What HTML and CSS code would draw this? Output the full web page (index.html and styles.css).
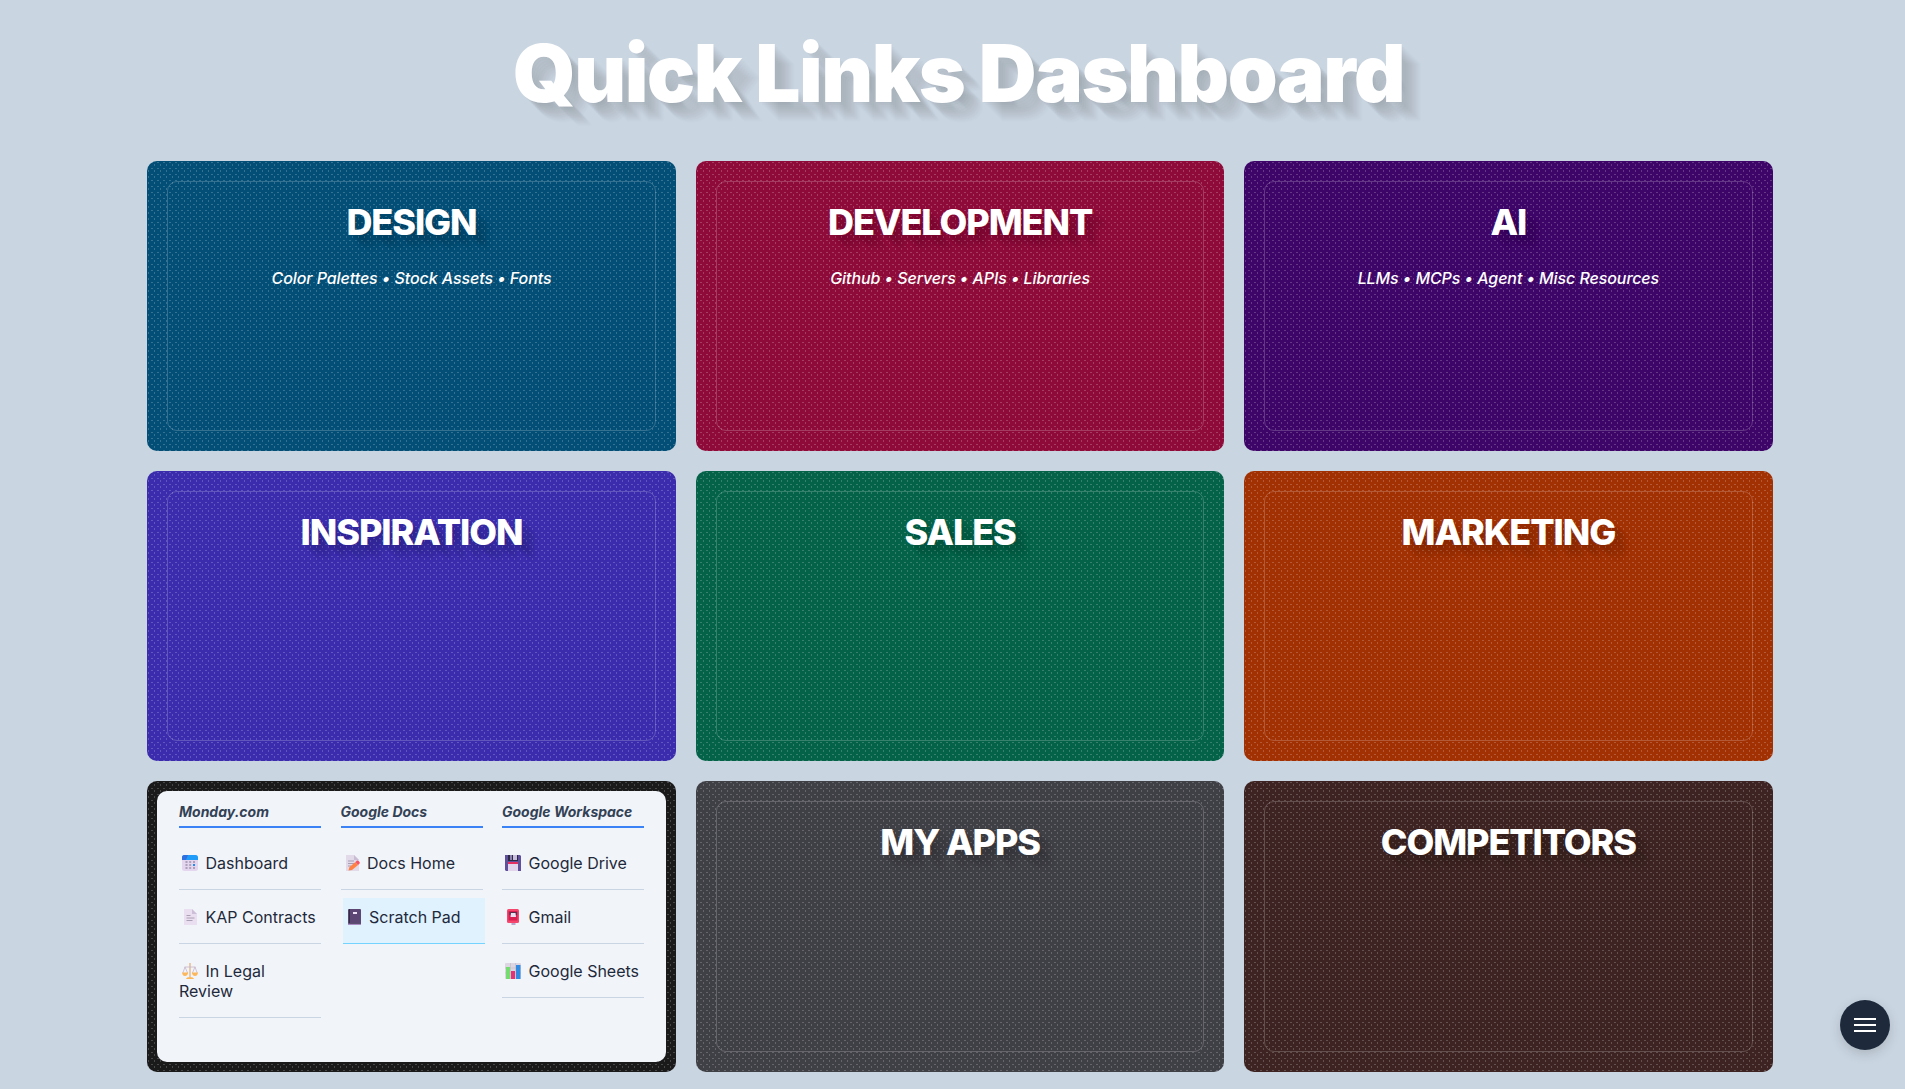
FILE: index.html
```html
<!DOCTYPE html>
<html lang="en">
<head>
<meta charset="utf-8">
<title>Quick Links Dashboard</title>
<link rel="stylesheet" href="styles.css">
</head>
<body>
<h1 class="title">Quick Links Dashboard</h1>
<main class="grid">
  <section class="card design"><div class="face"><h2>DESIGN</h2><p>Color Palettes • Stock Assets • Fonts</p></div></section>
  <section class="card development"><div class="face"><h2>DEVELOPMENT</h2><p>Github • Servers • APIs • Libraries</p></div></section>
  <section class="card ai"><div class="face"><h2>AI</h2><p>LLMs • MCPs • Agent • Misc Resources</p></div></section>
  <section class="card inspiration"><div class="face"><h2>INSPIRATION</h2></div></section>
  <section class="card sales"><div class="face"><h2>SALES</h2></div></section>
  <section class="card marketing"><div class="face"><h2>MARKETING</h2></div></section>
  <section class="card open">
    <div class="panel">
      <div class="col">
        <h3>Monday.com</h3>
        <a class="link"><svg class="ico" viewBox="0 0 16 16"><rect width="16" height="16" rx="2.500" fill="#e3d6ee"/><path d="M0 5V2.500Q0 0 2.500 0H13.500Q16 0 16 2.500V5Z" fill="#1e9cf8"/><path d="M0 5V2.500Q0 0 2.500 0H6L4 5Z" fill="#2f6fe0"/><path d="M3.500 7h2M7.200 7h2M11 7h2M3.500 10h2M7.200 10h2M3.500 13h2M7.200 13h2M11 13h2" stroke="#9b91aa" stroke-width="1.600"/><path d="M11 10h2" stroke="#1e8cf5" stroke-width="1.800"/></svg>Dashboard</a>
        <a class="link"><svg class="ico" viewBox="0 0 16 16"><path d="M2 0H10L15 5V16H2Z" fill="#e9dff0"/><path d="M10 0L15 5H10Z" fill="#cdbfd8"/><path d="M4.500 6.500h4M4.500 9h8M4.500 11.500h6" stroke="#aaa0b5"/></svg>KAP Contracts</a>
        <a class="link"><svg class="ico" viewBox="0 0 16 16"><path d="M8 0V14" stroke="#e2b98a" stroke-width="1.400"/><path d="M2.500 4H13.500M3 4L.8 10M3 4L5.600 10M13 4L10.400 10M13 4L15.200 10" fill="none" stroke="#c9b2c9" stroke-width=".8"/><path d="M0 9.500H6.200Q5.500 13 3 13T0 9.500ZM9.800 9.500H16Q15.500 13 13 13T9.800 9.500ZM4 16Q4.500 14 8 14T12 16Z" fill="#fdb75b"/></svg>In Legal Review</a>
      </div>
      <div class="col">
        <h3>Google Docs</h3>
        <a class="link"><svg class="ico" viewBox="0 0 16 16"><path d="M2 0H10L15 5V16H2Z" fill="#e2d9e9"/><path d="M10 0L15 5H10Z" fill="#c9bdd4"/><path d="M4 6h6M4 8.500h7M4 11h3" stroke="#a99fb5"/><path d="M4.500 15.500L5.500 12L11.500 7L14 10L8 15Z" fill="#ff8144"/><path d="M11.500 7L13 5.500Q15 5 16 8L14 10Z" fill="#f85264"/></svg>Docs Home</a>
        <a class="link active"><svg class="ico" viewBox="0 0 16 16"><rect x="2" width="13" height="16" rx="1" fill="#5c4673"/><path d="M3.500 0V14.500H15" fill="none" stroke="#332d43" stroke-width="1"/><path d="M2 15.300H15" stroke="#ad8fc7" stroke-width="1.300"/><rect x="7" y="3" width="4" height="2" fill="#eee4f5"/></svg>Scratch Pad</a>
      </div>
      <div class="col">
        <h3>Google Workspace</h3>
        <a class="link"><svg class="ico" viewBox="0 0 16 16"><path d="M0 0H15L16 1V16H1L0 15Z" fill="#60509c"/><path d="M4 0H12V6H4Z" fill="#c9bddd"/><path d="M3 0H8V6H3Z" fill="#2c2945"/><path d="M5 0H7V5H5Z" fill="#8e82b0"/><path d="M12 0H13V6H5V5H12Z" fill="#2c2945"/><path d="M3 7H13V16H3Z" fill="#e2d4ed"/><path d="M3 7H13V9H3Z" fill="#e52f62"/></svg>Google Drive</a>
        <a class="link"><svg class="ico" viewBox="0 0 16 16"><rect x="6.500" y="13" width="4" height="3" fill="#baa6ca"/><rect x="2" width="12" height="14" rx="1.500" fill="#f5476d"/><rect x="3.500" y="2" width="9" height="9.500" fill="#d91d50"/><path d="M4.500 3H12V6H4.500Z" fill="#5b304e"/><path d="M6 4H10.500L11 8H5.500Z" fill="#eadff1"/></svg>Gmail</a>
        <a class="link"><svg class="ico" viewBox="0 0 16 16"><rect width="16" height="16" rx="1" fill="#dcd5e2"/><path d="M5.500 0V16M10.500 0V16M0 5H16M0 10H16" stroke="#bfb8c8" stroke-width=".6"/><path d="M1 4H5V16H1Z" fill="#74dc70"/><path d="M6 8H10V16H6Z" fill="#e53277"/><path d="M11 2H15.500V16H11Z" fill="#328be0"/></svg>Google Sheets</a>
      </div>
    </div>
  </section>
  <section class="card apps"><div class="face"><h2>MY APPS</h2></div></section>
  <section class="card competitors"><div class="face"><h2>COMPETITORS</h2></div></section>
</main>
<button class="menu" aria-label="Menu"><span></span><span></span><span></span></button>
</body>
</html>
```
FILE: styles.css
```css
* { box-sizing: border-box; margin: 0; }
body {
  height: 1089px;
  overflow: hidden;
  background: #c9d5e1;
  font-family: Inter, sans-serif;
}
.title {
  padding: 25px 0 39.700px 12px;
  text-align: center;
  font-size: 80px;
  line-height: 96px;
  font-weight: 900;
  letter-spacing: -1.470px;
  color: #fff;
  text-shadow: 1px 1px 1px rgba(0,0,0,.02), 3px 3px 1px rgba(0,0,0,.02), 5px 5px 2px rgba(0,0,0,.02), 7px 7px 2px rgba(0,0,0,.02), 9px 9px 2px rgba(0,0,0,.02), 11px 11px 2px rgba(0,0,0,.02), 13px 13px 2px rgba(0,0,0,.02), 15px 15px 2px rgba(0,0,0,.02), 17px 17px 2px rgba(0,0,0,.02), 19px 19px 2px rgba(0,0,0,.02);
}
.grid {
  display: grid;
  grid-template-columns: repeat(3, 1fr);
  grid-auto-rows: 290.330px;
  gap: 20px;
  width: 1625.500px;
  margin-left: 147px;
}
.card {
  padding: 20px;
  border-radius: 10px;
  background-image: url("data:image/svg+xml,%3Csvg xmlns='http://www.w3.org/2000/svg' width='6' height='6'%3E%3Cpath d='M1 3h1v2H1zM4 1h2v1H4z' fill='white' fill-opacity='.2'/%3E%3C/svg%3E");
}
.design { background-color: #024e76; }
.development { background-color: #8e0b39; }
.ai { background-color: #3e0568; }
.inspiration { background-color: #3a2cac; }
.sales { background-color: #036248; }
.marketing { background-color: #a13003; }
.open { background-color: #1a1a1a; padding: 10px; }
.apps { background-color: #3f3f46; }
.competitors { background-color: #3d2422; }
.face {
  height: 100%;
  padding-top: 18px;
  border: 1px solid rgba(255,255,255,.2);
  border-radius: 10px;
  text-align: center;
  color: #fff;
}
.face h2 {
  font-size: 36px;
  line-height: 44px;
  font-weight: 800;
  letter-spacing: -1.080px;
  text-shadow: 2px 2px 2px rgba(0,0,0,.02), 4px 4px 3px rgba(0,0,0,.03), 6px 6px 4px rgba(0,0,0,.03), 8px 8px 4px rgba(0,0,0,.03), 10px 10px 4px rgba(0,0,0,.03), 12px 12px 5px rgba(0,0,0,.03), 14px 14px 5px rgba(0,0,0,.03);
}
.face p {
  margin-top: 21px;
  font-size: 16px;
  line-height: 26px;
  font-style: italic;
  font-weight: 500;
  letter-spacing: -.080px;
}
.panel {
  display: grid;
  grid-template-columns: repeat(3, 142px);
  gap: 19.500px;
  height: 271px;
  padding: 10px 22px;
  border-radius: 10px;
  background: #f1f5f9;
}
.col h3 {
  height: 27px;
  margin-bottom: 16px;
  border-bottom: 2px solid #3b82f6;
  font-size: 14px;
  line-height: 22px;
  font-style: italic;
  font-weight: 700;
  color: #334155;
  white-space: nowrap;
}
.link {
  display: block;
  margin-bottom: 8px;
  padding: 9px 0 16px;
  border-bottom: 1px solid #c9d5e2;
  font-size: 16px;
  line-height: 20px;
  color: #1e293b;
}
.ico {
  width: 16px;
  height: 16px;
  margin: 0 7.500px 0 3px;
  vertical-align: -2px;
}
.active {
  margin-left: 2px;
  margin-right: -2px;
  background: #dff2fe;
  border-color: #74d4ff;
}
.menu {
  position: absolute;
  left: 1840px;
  top: 1000px;
  display: flex;
  flex-direction: column;
  align-items: center;
  justify-content: center;
  gap: 4px;
  width: 50px;
  height: 50px;
  padding: 0;
  border: 0;
  border-radius: 50%;
  background: #1e293b;
  box-shadow: 0 4px 12px rgba(0,0,0,.15);
}
.menu span { width: 22px; height: 2px; background: #fff; }
```
